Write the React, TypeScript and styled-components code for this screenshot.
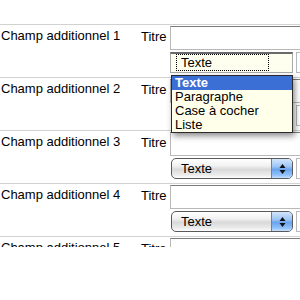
import React from "react";
import styled, { createGlobalStyle } from "styled-components";

const Global = createGlobalStyle`
  html, body { margin: 0; padding: 0; background: #fff; }
  body { font-family: "Liberation Sans", Arial, sans-serif; font-size: 13px; color: #000; }
`;

const Page = styled.div`
  width: 300px;
  height: 247px;
  overflow: hidden;
  padding-top: 24px;
  box-sizing: border-box;
`;

const Row = styled.div`
  display: grid;
  grid-template-columns: 140px 30px 200px;
  height: 52px;
  border-top: 1px solid #d2d2d2;
`;

const Label = styled.div`
  padding: 3px 0 0 1px;
  line-height: 15px;
  white-space: nowrap;
`;

const SubLabel = styled.div`
  padding: 4px 0 0 1px;
  line-height: 15px;
`;

const Fields = styled.div`
  position: relative;
  padding-top: 1px;
  display: flex;
  flex-direction: column;
  gap: 2px;
`;

const TextInput = styled.div`
  width: 200px;
  height: 24px;
  box-sizing: border-box;
  border: 1px solid #b8b8b8;
  border-top-color: #7c7c7c;
  background: #fff;
`;

const SelectLine = styled.div`
  display: flex;
  align-items: flex-start;
  gap: 3px;
`;

const AquaSelect = styled.div`
  margin-left: 1px;
  width: 122px;
  height: 21px;
  box-sizing: border-box;
  border: 1px solid #5a5a5a;
  border-radius: 5px;
  display: flex;
  overflow: hidden;
  background: linear-gradient(#ffffff 0%, #f2f2f2 35%, #d9d9d9 55%, #ececec 85%, #ffffff 100%);
`;

const AquaText = styled.span`
  flex: 1;
  padding-left: 9px;
  line-height: 19px;
`;

const AquaButton = styled.span`
  width: 20px;
  border-left: 1px solid #5f80b8;
  background: linear-gradient(#d4e6fc 0%, #9cc4f5 40%, #6aa4ef 55%, #92c2fb 85%, #c6e2ff 100%);
  display: flex;
  align-items: center;
  justify-content: center;
`;

const OpenSelect = styled.div`
  width: 123px;
  height: 21px;
  box-sizing: border-box;
  border: 1px solid #a8a8a8;
  border-top: 2px solid #6a6a6a;
  background: #fffff0;
  padding: 0 0 0 5px;
`;

const Focus = styled.span`
  display: block;
  width: 93px;
  height: 17px;
  box-sizing: border-box;
  border: 1px dotted #000;
  padding-left: 4px;
  line-height: 15px;
`;

const Ghost = styled.div`
  width: 20px;
  height: 21px;
  box-sizing: border-box;
  border: 1px solid #b8b8b8;
  border-right: none;
`;

const ListBox = styled.div`
  position: absolute;
  left: 1px;
  top: 50px;
  width: 122px;
  box-sizing: border-box;
  border: 1px solid #2a2a2a;
  background: #ffffea;
  box-shadow: 2px 3px 6px rgba(0, 0, 0, 0.45);
  z-index: 5;
`;

const Option = styled.div<{ $active?: boolean }>`
  height: 14px;
  line-height: 14px;
  padding-left: 3px;
  white-space: nowrap;
  background: ${(p) => (p.$active ? "#3b6fd6" : "transparent")};
  color: ${(p) => (p.$active ? "#fff" : "#000")};
  font-weight: ${(p) => (p.$active ? "bold" : "normal")};
`;

const Arrows = () => (
  <svg width="7" height="12" viewBox="0 0 7 12">
    <path d="M3.5 1 L6.5 5 L0.5 5 Z" fill="#111" />
    <path d="M3.5 11 L6.5 7 L0.5 7 Z" fill="#111" />
  </svg>
);

const options = ["Texte", "Paragraphe", "Case à cocher", "Liste"];

export default function App() {
  const rows = [1, 2, 3, 4, 5];
  return (
    <>
      <Global />
      <Page>
        {rows.map((n) => (
          <Row key={n}>
            <Label>Champ additionnel {n}</Label>
            <SubLabel>Titre</SubLabel>
            <Fields>
              <TextInput />
              <SelectLine>
                {n === 1 ? (
                  <OpenSelect>
                    <Focus>Texte</Focus>
                  </OpenSelect>
                ) : (
                  <AquaSelect>
                    <AquaText>Texte</AquaText>
                    <AquaButton>
                      <Arrows />
                    </AquaButton>
                  </AquaSelect>
                )}
                <Ghost />
              </SelectLine>
              {n === 1 && (
                <ListBox>
                  {options.map((o, i) => (
                    <Option key={o} $active={i === 0}>
                      {o}
                    </Option>
                  ))}
                </ListBox>
              )}
            </Fields>
          </Row>
        ))}
      </Page>
    </>
  );
}
